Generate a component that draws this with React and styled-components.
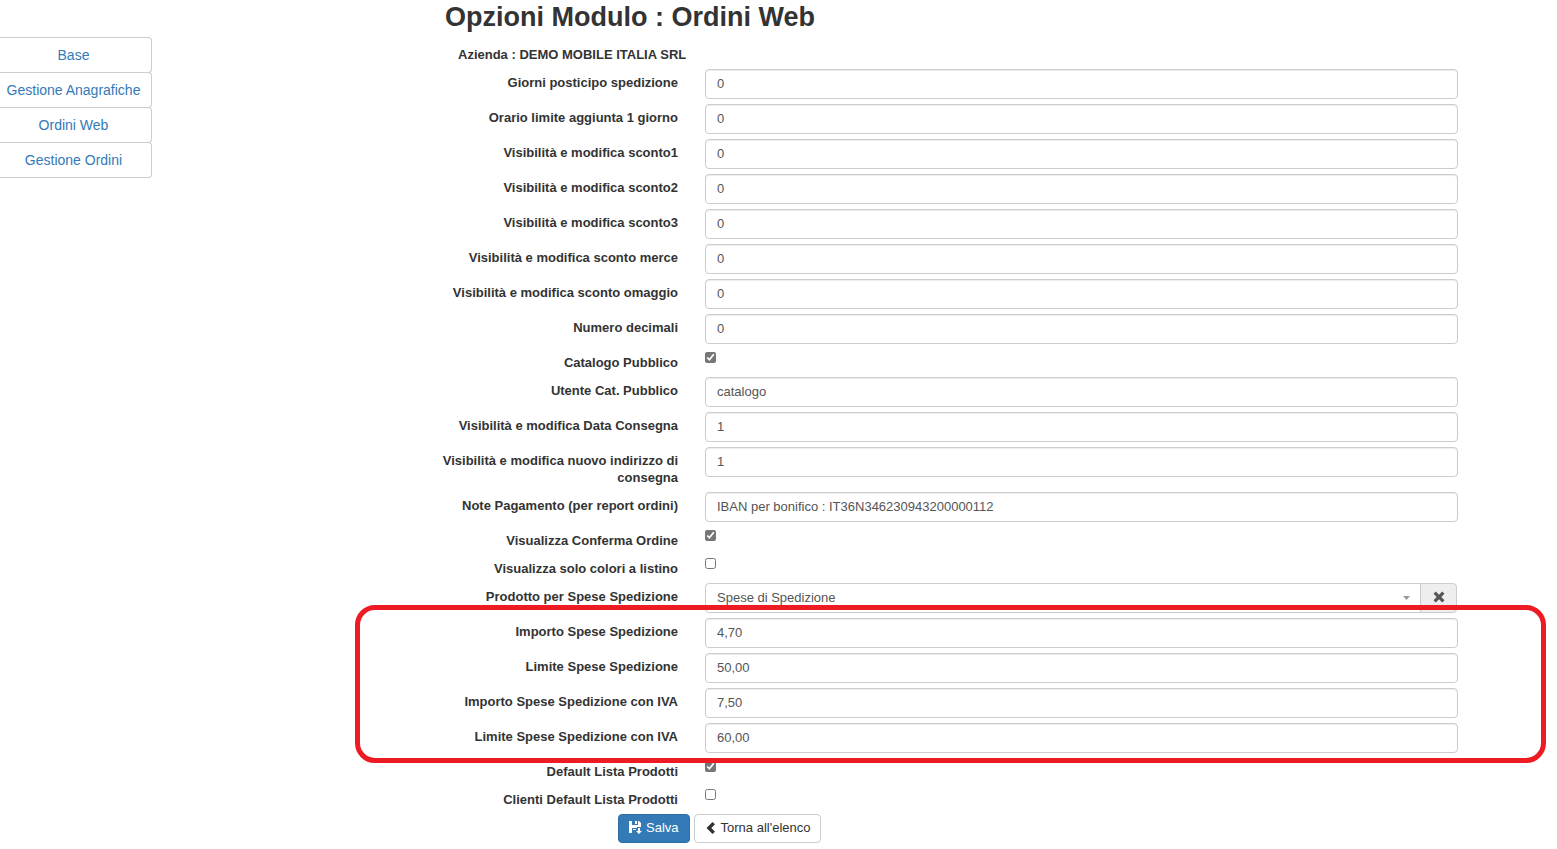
import React, { useState } from 'react';
import styled, { createGlobalStyle } from 'styled-components';

const GlobalStyle = createGlobalStyle`
  * {
    box-sizing: border-box;
  }

  body {
    margin: 0;
    background-color: #fff;
    color: #333;
    font-family: "Liberation Sans", Arial, sans-serif;
    font-size: 13px;
    line-height: 17px;
  }
`;

const Page = styled.div`
  display: flex;
  align-items: flex-start;
`;

const Sidebar = styled.nav`
  width: 152px;
  flex-shrink: 0;
  padding-top: 37px;
`;

const SidebarLink = styled.a`
  display: block;
  height: 36px;
  margin-bottom: -1px;
  padding: 9px 4px 0 0;
  border: 1px solid #ccc;
  border-left: 0;
  border-radius: 0 4px 4px 0;
  color: #337ab7;
  font-size: 14px;
  text-align: center;
  text-decoration: none;
`;

const Main = styled.main`
  flex: 1;
  min-width: 0;
  padding: 0 99px 6px 286px;
`;

const Title = styled.h1`
  margin: 0;
  padding: 1px 0 0 7px;
  font-size: 27px;
  line-height: 33px;
`;

const Company = styled.p`
  margin: 0;
  padding: 12px 0 6px 20px;
  font-weight: bold;
`;

const Row = styled.div`
  display: flex;
  gap: 27px;
  min-height: ${({ $check }) => ($check ? 28 : 35)}px;
  padding-bottom: ${({ $wrap }) => ($wrap ? 6 : 0)}px;
`;

const Label = styled.label`
  width: 240px;
  flex-shrink: 0;
  padding-top: 5px;
  font-weight: bold;
  text-align: right;
`;

const TextInput = styled.input`
  flex: 1;
  min-width: 0;
  height: 30px;
  padding: 0 11px 1px;
  border: 1px solid #ccc;
  border-radius: 4px;
  box-shadow: inset 0 1px 1px rgba(0, 0, 0, 0.075);
  background-color: #fff;
  color: #555;
  font-family: inherit;
  font-size: 13px;
`;

const Checkbox = styled.input`
  width: 11px;
  height: 11px;
  margin: 3px 0 0;
  accent-color: #767676;
`;

const SelectGroup = styled.div`
  display: flex;
  flex: 1;
  min-width: 0;
  height: 30px;
  padding-right: 1px;
`;

const SelectBox = styled.div`
  position: relative;
  display: flex;
  flex: 1;
`;

const Select = styled.select`
  flex: 1;
  min-width: 0;
  padding: 0 24px 2px 11px;
  border: 1px solid #ccc;
  border-radius: 4px 0 0 4px;
  appearance: none;
  background-color: #fff;
  color: #555;
  font-family: inherit;
  font-size: 13px;
`;

const Caret = styled.svg`
  position: absolute;
  top: 13px;
  right: 11px;
  pointer-events: none;
`;

const ClearButton = styled.button`
  display: flex;
  width: 37px;
  margin-left: -1px;
  padding: 0 0 2px;
  align-items: center;
  justify-content: center;
  border: 1px solid #ccc;
  border-radius: 0 4px 4px 0;
  background-color: #eee;
  color: #555;
`;

const Highlighted = styled.div`
  position: relative;

  &::after {
    content: '';
    position: absolute;
    top: -13px;
    right: -88px;
    bottom: -5px;
    left: -83px;
    border: 5px solid #ed1c24;
    border-radius: 20px;
    pointer-events: none;
  }
`;

const Actions = styled.div`
  display: flex;
  gap: 4px;
  padding-left: 180px;
`;

const ActionButton = styled.button`
  display: flex;
  height: 29px;
  padding: 0 10px 2px;
  align-items: center;
  gap: 4px;
  border: 1px solid ${({ $primary }) => ($primary ? '#2e6da4' : '#ccc')};
  border-radius: 4px;
  background-color: ${({ $primary }) => ($primary ? '#337ab7' : '#fff')};
  color: ${({ $primary }) => ($primary ? '#fff' : '#333')};
  font-family: inherit;
  font-size: 13px;
`;

const links = ['Base', 'Gestione Anagrafiche', 'Ordini Web', 'Gestione Ordini'];

const generalFields = [
  { id: 'giorni', label: 'Giorni posticipo spedizione', value: '0' },
  { id: 'orario', label: 'Orario limite aggiunta 1 giorno', value: '0' },
  { id: 'sconto1', label: 'Visibilità e modifica sconto1', value: '0' },
  { id: 'sconto2', label: 'Visibilità e modifica sconto2', value: '0' },
  { id: 'sconto3', label: 'Visibilità e modifica sconto3', value: '0' },
  { id: 'merce', label: 'Visibilità e modifica sconto merce', value: '0' },
  { id: 'omaggio', label: 'Visibilità e modifica sconto omaggio', value: '0' },
  { id: 'decimali', label: 'Numero decimali', value: '0' },
  { id: 'catalogo', label: 'Catalogo Pubblico', checked: true },
  { id: 'utente', label: 'Utente Cat. Pubblico', value: 'catalogo' },
  { id: 'consegna', label: 'Visibilità e modifica Data Consegna', value: '1' },
  { id: 'indirizzo', label: 'Visibilità e modifica nuovo indirizzo di consegna', value: '1', wrap: true },
  { id: 'note', label: 'Note Pagamento (per report ordini)', value: 'IBAN per bonifico : IT36N346230943200000112' },
  { id: 'conferma', label: 'Visualizza Conferma Ordine', checked: true },
  { id: 'colori', label: 'Visualizza solo colori a listino', checked: false },
];

const shippingFields = [
  { id: 'importo', label: 'Importo Spese Spedizione', value: '4,70' },
  { id: 'limite', label: 'Limite Spese Spedizione', value: '50,00' },
  { id: 'importoIva', label: 'Importo Spese Spedizione con IVA', value: '7,50' },
  { id: 'limiteIva', label: 'Limite Spese Spedizione con IVA', value: '60,00' },
];

const listFields = [
  { id: 'lista', label: 'Default Lista Prodotti', checked: true },
  { id: 'clienti', label: 'Clienti Default Lista Prodotti', checked: false },
];

const Field = ({ id, label, value, checked, wrap }) => {
  const isCheck = checked !== undefined;

  return (
    <Row $check={isCheck} $wrap={wrap}>
      <Label htmlFor={id}>{label}</Label>
      {isCheck
        ? <Checkbox id={id} type="checkbox" defaultChecked={checked} />
        : <TextInput id={id} type="text" defaultValue={value} />}
    </Row>
  );
};

const SaveIcon = () => (
  <svg width="13" height="13" viewBox="0 0 13 13" fill="currentColor" aria-hidden="true">
    <path d="M0 0h3v4h6V0h1l2 2v4H8v1H3v5H0z" />
    <path d="M6 0h2v3H6zM4 8h3v1H4zM9 7h2v3h2l-3 3-3-3h2z" />
  </svg>
);

const BackIcon = () => (
  <svg width="12" height="12" viewBox="0 0 12 12" fill="currentColor" aria-hidden="true">
    <path d="M7.500 0L10 2.200 6.300 6 10 9.800 7.500 12 1.500 6z" />
  </svg>
);

const RemoveIcon = () => (
  <svg width="12" height="12" viewBox="0 0 12 12" fill="currentColor" aria-hidden="true">
    <path d="M2.800 .5L6 3.700 9.200 .5l2.300 2.300L8.300 6l3.200 3.200-2.300 2.300L6 8.300l-3.200 3.200L.5 9.200 3.700 6 .5 2.800z" />
  </svg>
);

const App = () => {
  const [product, setProduct] = useState('spese');

  return (
    <>
      <GlobalStyle />
      <Page>
        <Sidebar>
          {links.map((link) => (
            <SidebarLink key={link} href="#">{link}</SidebarLink>
          ))}
        </Sidebar>

        <Main>
          <Title>Opzioni Modulo : Ordini Web</Title>
          <Company>Azienda : DEMO MOBILE ITALIA SRL</Company>

          <form onSubmit={(e) => e.preventDefault()}>
            {generalFields.map((field) => <Field key={field.id} {...field} />)}

            <Row>
              <Label htmlFor="prodotto">Prodotto per Spese Spedizione</Label>
              <SelectGroup>
                <SelectBox>
                  <Select id="prodotto" value={product} onChange={(e) => setProduct(e.target.value)}>
                    <option value="" />
                    <option value="spese">Spese di Spedizione</option>
                  </Select>
                  <Caret width="7" height="4" viewBox="0 0 7 4" aria-hidden="true">
                    <path d="M0 0h7L3.500 4z" fill="#999" />
                  </Caret>
                </SelectBox>
                <ClearButton type="button" aria-label="Rimuovi" onClick={() => setProduct('')}>
                  <RemoveIcon />
                </ClearButton>
              </SelectGroup>
            </Row>

            <Highlighted>
              {shippingFields.map((field) => <Field key={field.id} {...field} />)}
            </Highlighted>

            {listFields.map((field) => <Field key={field.id} {...field} />)}

            <Actions>
              <ActionButton type="submit" $primary><SaveIcon />Salva</ActionButton>
              <ActionButton type="button"><BackIcon />Torna all'elenco</ActionButton>
            </Actions>
          </form>
        </Main>
      </Page>
    </>
  );
};

export default App;
